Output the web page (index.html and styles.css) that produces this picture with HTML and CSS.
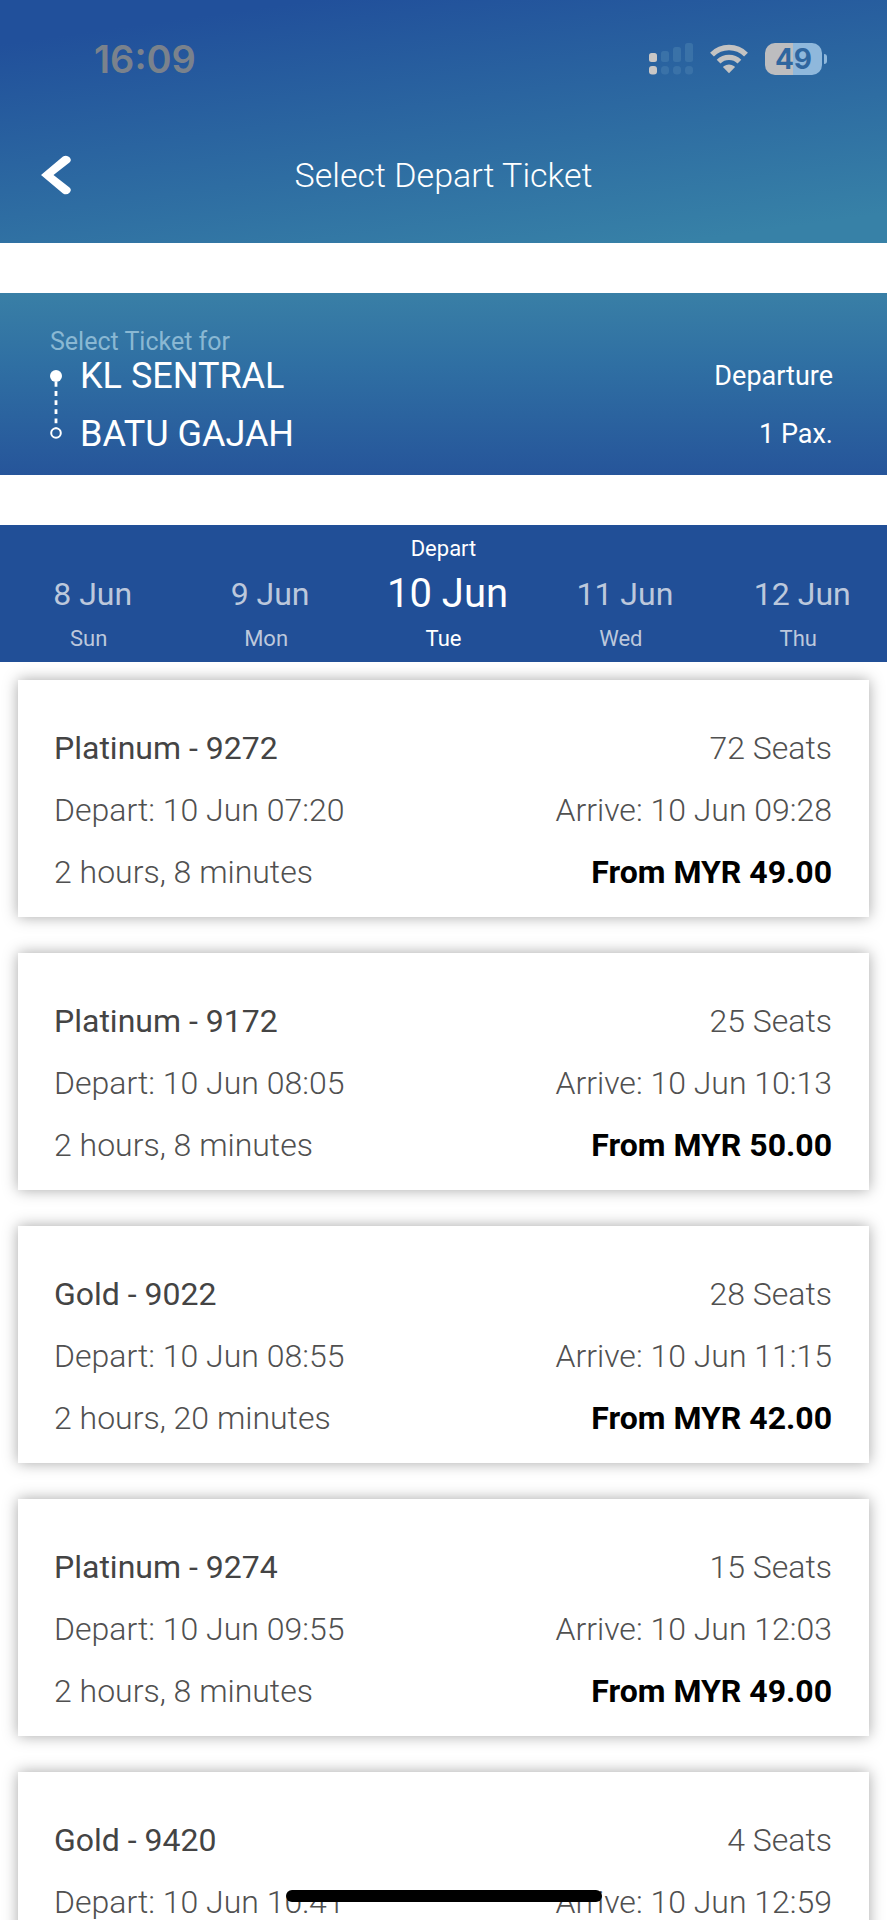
FILE: index.html
```
<!DOCTYPE html>
<html lang="en">

<head>
    <meta charset="utf-8">
    <meta name="viewport" content="width=device-width, initial-scale=1">
    <title>Select Depart Ticket</title>
    <link rel="stylesheet" href="styles.css">
</head>

<body>
    <header class="header">
        <div class="status">
            <span class="time">16:09</span>
            <div class="status-icons">
                <svg width="44" height="32" viewBox="0 0 44 32">
                    <g fill="#c9c7c6">
                        <rect x="0" y="10" width="8" height="9" rx="2.5" />
                        <rect x="0" y="23" width="8" height="8.5" rx="3" />
                    </g>
                    <g fill="#3a72a8">
                        <rect x="12" y="8" width="8" height="11" rx="2.5" />
                        <rect x="24" y="4" width="8" height="15" rx="2.5" />
                        <rect x="36" y="0" width="8" height="19" rx="2.5" />
                        <rect x="12" y="23" width="8" height="8.5" rx="3.5" />
                        <rect x="24" y="23" width="8" height="8.5" rx="3.5" />
                        <rect x="36" y="23" width="8" height="8.5" rx="3.5" />
                    </g>
                </svg>
                <svg width="38" height="32" viewBox="0 0 38 32">
                    <g fill="none" stroke="#c4c3c2" stroke-width="5.4">
                        <path d="M2 11.6A24 24 0 0 1 36 11.6" />
                        <path d="M8.6 18.6A14.8 14.8 0 0 1 29.4 18.6" />
                    </g>
                    <path d="M19 30.2L13.4 24.6Q12.8 23.9 13.6 23.3Q19 19.6 24.4 23.3Q25.2 23.9 24.6 24.6Z" fill="#c4c3c2" />
                </svg>
                <div class="battery"><span class="battery-level">49</span></div>
            </div>
        </div>
        <nav class="nav">
            <button class="back" aria-label="Back">
                <svg width="32" height="40" viewBox="0 0 32 40">
                    <path d="M1 20L23 1.6Q26.500 -.5 29.500 2.2Q32.200 5 29.500 7.600L13.500 20L29.500 32.400Q32.200 35 29.500 37.800Q26.500 40.500 23 38.400Z" fill="#fff" />
                </svg>
            </button>
            <h1 class="title">Select Depart Ticket</h1>
        </nav>
    </header>

    <section class="route">
        <p class="route-label">Select Ticket for</p>
        <div class="route-body">
            <svg class="route-line" width="12" height="70" viewBox="0 0 12 70">
                <circle cx="6" cy="6" r="6" fill="#fff" />
                <path d="M6 12V58" stroke="#fff" stroke-width="2.8" stroke-dasharray="4.8 4.3" />
                <circle cx="6" cy="63" r="4.8" fill="none" stroke="#fff" stroke-width="2" />
            </svg>
            <div class="stations">
                <span>KL SENTRAL</span>
                <span>BATU GAJAH</span>
            </div>
            <div class="trip">
                <span>Departure</span>
                <span>1 Pax.</span>
            </div>
        </div>
    </section>

    <div class="dates">
        <button class="date"><span class="date-day">8 Jun</span><span class="date-week">Sun</span></button>
        <button class="date"><span class="date-day">9 Jun</span><span class="date-week">Mon</span></button>
        <button class="date active"><span class="date-type">Depart</span><span class="date-day">10 Jun</span><span class="date-week">Tue</span></button>
        <button class="date"><span class="date-day">11 Jun</span><span class="date-week">Wed</span></button>
        <button class="date"><span class="date-day">12 Jun</span><span class="date-week">Thu</span></button>
    </div>

    <main class="tickets">
        <article class="ticket">
            <div class="row"><h2 class="train">Platinum - 9272</h2><span>72 Seats</span></div>
            <div class="row"><span>Depart: 10 Jun 07:20</span><span>Arrive: 10 Jun 09:28</span></div>
            <div class="row"><span>2 hours, 8 minutes</span><strong class="price">From MYR 49.00</strong></div>
        </article>
        <article class="ticket">
            <div class="row"><h2 class="train">Platinum - 9172</h2><span>25 Seats</span></div>
            <div class="row"><span>Depart: 10 Jun 08:05</span><span>Arrive: 10 Jun 10:13</span></div>
            <div class="row"><span>2 hours, 8 minutes</span><strong class="price">From MYR 50.00</strong></div>
        </article>
        <article class="ticket">
            <div class="row"><h2 class="train">Gold - 9022</h2><span>28 Seats</span></div>
            <div class="row"><span>Depart: 10 Jun 08:55</span><span>Arrive: 10 Jun 11:15</span></div>
            <div class="row"><span>2 hours, 20 minutes</span><strong class="price">From MYR 42.00</strong></div>
        </article>
        <article class="ticket">
            <div class="row"><h2 class="train">Platinum - 9274</h2><span>15 Seats</span></div>
            <div class="row"><span>Depart: 10 Jun 09:55</span><span>Arrive: 10 Jun 12:03</span></div>
            <div class="row"><span>2 hours, 8 minutes</span><strong class="price">From MYR 49.00</strong></div>
        </article>
        <article class="ticket">
            <div class="row"><h2 class="train">Gold - 9420</h2><span>4 Seats</span></div>
            <div class="row"><span>Depart: 10 Jun 10:41</span><span>Arrive: 10 Jun 12:59</span></div>
        </article>
    </main>

    <div class="home-bar"></div>
</body>

</html>
```

FILE: styles.css
```
* {
    box-sizing: border-box;
}

body {
    margin: 0;
    height: 100vh;
    display: flex;
    flex-direction: column;
    overflow: hidden;
    background: #fff;
    color: #505050;
    font-family: Roboto, "Liberation Sans", sans-serif;
}

button {
    border: none;
    padding: 0;
    background: none;
    color: inherit;
    font: inherit;
    cursor: pointer;
}

/* header */
.header {
    flex: none;
    padding-bottom: 11px;
    margin-bottom: 50px;
    background: linear-gradient(172deg, #21509b 12%, #3781a7 92%);
    color: #fff;
}

.status {
    display: flex;
    justify-content: space-between;
    align-items: center;
    height: 118px;
    padding: 0 60px 0 94px;
}

.time {
    color: #7a828c;
    font-family: Inter, sans-serif;
    font-size: 38px;
    font-weight: 600;
}

.status-icons {
    display: flex;
    align-items: center;
    gap: 17px;
}

.battery {
    display: flex;
    align-items: center;
}

.battery-level {
    width: 57px;
    border-radius: 10px;
    background: linear-gradient(90deg, #bdbdbf 50%, #8fb8dc 50%);
    color: #2f669f;
    font-family: Inter, sans-serif;
    font-size: 28px;
    font-weight: 700;
    line-height: 32px;
    text-align: center;
}

.battery::after {
    content: "";
    width: 3px;
    height: 10px;
    margin-left: 2px;
    border-radius: 0 5px 5px 0;
    background: #8fb8dc;
}

.nav {
    display: grid;
    grid-template-columns: 72px 1fr 72px;
    align-items: center;
    height: 114px;
}

.back {
    display: flex;
    justify-content: flex-end;
}

.title {
    margin: 0;
    font-size: 34px;
    font-weight: 300;
    text-align: center;
}

/* route */
.route {
    flex: none;
    padding: 36px 54px 20px 50px;
    margin-bottom: 50px;
    background: linear-gradient(#397fa6, #2f6fa3 40%, #26559a);
    color: #fff;
}

.route-label {
    margin: 0;
    color: #8ab8d3;
    font-size: 25px;
    line-height: 26px;
}

.route-body {
    display: flex;
    align-items: center;
}

.stations,
.trip {
    display: flex;
    flex-direction: column;
    gap: 16px;
    line-height: 42px;
}

.stations {
    flex: 1;
    margin-left: 18px;
    font-size: 36px;
}

.trip {
    font-size: 27px;
    text-align: right;
}

/* dates */
.dates {
    flex: none;
    display: grid;
    grid-template-columns: repeat(5, 1fr);
    padding: 10px 0 9px;
    background: #214f97;
    color: #bcc8dc;
}

.date {
    display: flex;
    flex-direction: column;
    justify-content: flex-end;
    align-items: center;
    font-size: 22px;
    line-height: 28px;
}

.date-day {
    padding-left: 8px;
    font-size: 32px;
    line-height: 62px;
}

.active {
    color: #fff;
}

.active .date-day {
    font-size: 40px;
}

/* tickets */
.tickets {
    flex: 1;
    min-height: 0;
    display: flex;
    flex-direction: column;
    gap: 36px;
    padding: 18px;
    overflow-y: auto;
    scrollbar-width: none;
}

.ticket {
    flex: none;
    padding: 37px 37px 14px 36px;
    background: #fff;
    box-shadow: 0 0 14px rgba(0, 0, 0, 0.35);
    font-size: 32px;
    font-weight: 300;
    line-height: 62px;
}

.row {
    display: flex;
    justify-content: space-between;
}

.train {
    margin: 0;
    color: #444;
    font-size: 32px;
    font-weight: 400;
}

.price {
    color: #000;
    font-weight: 700;
}

.home-bar {
    position: fixed;
    bottom: 18px;
    left: 50%;
    width: 316px;
    height: 12px;
    margin-left: -158px;
    border-radius: 6px;
    background: #000;
}
```
